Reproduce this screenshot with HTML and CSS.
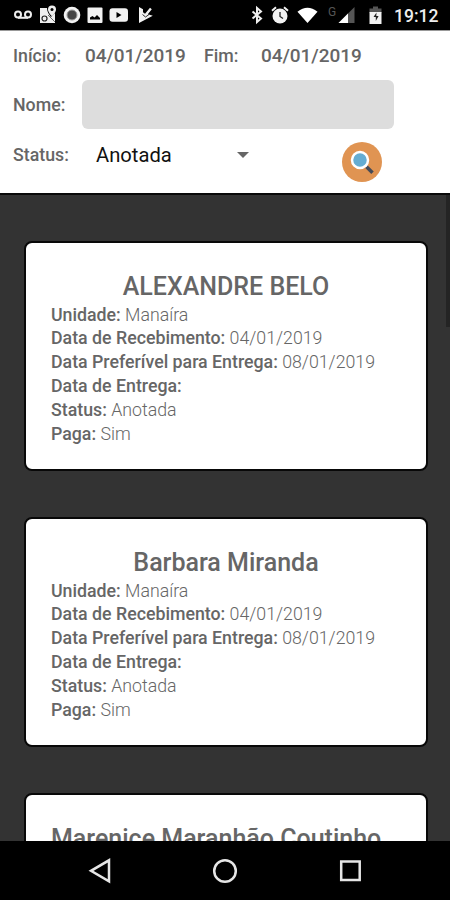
FILE: index.html
```html
<!DOCTYPE html>
<html lang="pt-BR">
<head>
  <meta charset="UTF-8" />
  <meta name="viewport" content="width=device-width, initial-scale=1.0" />
  <title>Encomendas</title>
  <link rel="stylesheet" href="styles.css">
</head>
<body>
  <div class="status-bar">
    <div class="notifications">
      <svg width="20" height="20" viewBox="0 0 20 20" fill="none" stroke="#eee" stroke-width="2"><circle cx="5" cy="9.5" r="3"/><circle cx="15" cy="9.5" r="3"/><path d="M5 12.8h10"/></svg>
      <svg width="18" height="20" viewBox="0 0 18 20"><path fill="#eee" d="M1 3h7c0 4 2 6 4 9l4-4v10H1z"/><path fill="#eee" d="M13 0.5a4 4 0 0 1 4 4c0 3-4 7-4 7s-4-4-4-7a4 4 0 0 1 4-4z"/><circle cx="13" cy="4.5" r="1.5"/><path d="M9 10l7 7" stroke="#444" stroke-width="0.8"/><circle cx="5.5" cy="13.5" r="2.5" fill="none" stroke="#222" stroke-width="1.2"/></svg>
      <svg width="18" height="20" viewBox="0 0 18 20"><circle cx="9" cy="10" r="8.3" fill="#f2f2f2"/><circle cx="9" cy="10" r="5" fill="#444" stroke="#999"/></svg>
      <svg width="16" height="20" viewBox="0 0 16 20"><rect x="0.5" y="2.5" width="15" height="15.5" rx="1" fill="#f2f2f2"/><path d="M3 14.5v-2l2.5-1.5 2 1.5 2.5-2.5 3 3v1.5z"/></svg>
      <svg width="20" height="20" viewBox="0 0 20 20"><rect x="0.5" y="3.2" width="18.5" height="13.5" rx="3" fill="#f2f2f2"/><path d="M7.5 7v6l5-3z"/></svg>
      <svg class="play-check" width="16" height="20" viewBox="0 0 16 20"><path fill="#f2f2f2" d="M1 2l4 2.3v3l2 1.5 5-6 1.8 1.5-4 5 5 1.500L1 18z"/><path d="M4.5 9.5l3 2.5 3.500-2.500" fill="none" stroke="#000" stroke-width="0.8"/></svg>
    </div>
    <div class="system">
      <svg width="12" height="20" viewBox="0 0 12 20" fill="none" stroke="#eee" stroke-width="2"><path d="M1.5 6.5l8.5 7L6 17V3l4 3.5L1.5 13.5"/></svg>
      <svg class="alarm" width="18" height="20" viewBox="0 0 18 20"><circle cx="9" cy="11" r="7.5" fill="#f2f2f2"/><path d="M1 5.7L5 2.3M17 5.7L13 2.3" stroke="#f2f2f2" stroke-width="2"/><path d="M9 7v4.5l3 2" fill="none" stroke="#222" stroke-width="1.3"/></svg>
      <svg class="wifi" width="21" height="20" viewBox="0 0 22 20"><path fill="#fff" d="M0.5 6.5Q11-1.5 21.5 6.5L11 18.5z"/></svg>
      <span class="network">G</span>
      <svg width="17" height="20" viewBox="0 0 17 20"><path fill="#555" d="M16.5 2v16H0.5z"/><path fill="#fff" d="M10 8.5V18H0.5z"/></svg>
      <svg class="battery" width="14" height="20" viewBox="0 0 14 20"><path fill="#555" d="M4 1.5h5v2h3.5V8h-12V3.5H4z"/><path fill="#f2f2f2" d="M0.5 7h12v12h-12z"/><path d="M7.5 7.5L4.5 12h2.3v4l2.8-5H7.3z" fill="#222"/></svg>
      <span class="clock">19:12</span>
    </div>
  </div>

  <form class="filters">
    <div class="row">
      <span class="label">Início:</span>
      <span class="date">04/01/2019</span>
      <span class="label end">Fim:</span>
      <span class="date">04/01/2019</span>
    </div>
    <div class="row name-row">
      <label class="label" for="nome">Nome:</label>
      <input type="text" id="nome">
    </div>
    <div class="row">
      <span class="label status">Status:</span>
      <div class="select">Anotada <span class="arrow"></span></div>
      <button type="button" class="search" aria-label="Buscar">
        <svg width="40" height="40" viewBox="0 0 40 40"><circle cx="20" cy="20" r="20" fill="#e09452"/><path d="M22.5 22.5l3 3" stroke="#eee" stroke-width="2.5"/><path d="M24.5 24.8l6 6" stroke="#444a57" stroke-width="3.6"/><circle cx="18" cy="18" r="8" fill="#65add2" stroke="#fff" stroke-width="2.5"/></svg>
      </button>
    </div>
  </form>

  <main class="orders">
    <div class="card">
      <h2>ALEXANDRE BELO</h2>
      <p><b>Unidade:</b> Manaíra</p>
      <p><b>Data de Recebimento:</b> 04/01/2019</p>
      <p><b>Data Preferível para Entrega:</b> 08/01/2019</p>
      <p><b>Data de Entrega:</b></p>
      <p><b>Status:</b> Anotada</p>
      <p><b>Paga:</b> Sim</p>
    </div>
    <div class="card">
      <h2>Barbara Miranda</h2>
      <p><b>Unidade:</b> Manaíra</p>
      <p><b>Data de Recebimento:</b> 04/01/2019</p>
      <p><b>Data Preferível para Entrega:</b> 08/01/2019</p>
      <p><b>Data de Entrega:</b></p>
      <p><b>Status:</b> Anotada</p>
      <p><b>Paga:</b> Sim</p>
    </div>
    <div class="card">
      <h2 class="long">Marenice Maranhão Coutinho</h2>
    </div>
    <div class="scrollbar"></div>
  </main>

  <nav class="nav-bar">
    <svg width="24" height="26" viewBox="0 0 24 26"><path d="M21 2.3v21L3 12.8z"/></svg>
    <svg width="26" height="26" viewBox="0 0 26 26"><circle cx="13" cy="13" r="10.8"/></svg>
    <svg width="24" height="26" viewBox="0 0 24 26"><rect x="3.2" y="3.5" width="18.5" height="18.5"/></svg>
  </nav>
</body>
</html>
```

FILE: styles.css
```css
* { box-sizing: border-box; }
body {
  margin: 0;
  height: 900px;
  display: flex;
  flex-direction: column;
  overflow: hidden;
  font-family: Roboto, sans-serif;
  font-size: 17.75px;
  color: #666;
  background: #333;
}
.status-bar {
  height: 30px;
  flex: none;
  display: flex;
  justify-content: space-between;
  padding: 5px 12px 0 13px;
  background: #000;
}
.notifications { display: flex; gap: 6px; }
.play-check { margin-left: 3px; }
.system { display: flex; }
.alarm { margin-left: 8px; }
.wifi { margin-left: 8px; }
.network { margin-left: 10px; width: 10px; font-size: 12px; line-height: 15px; color: #555; }
.battery { margin-left: 14px; }
.clock { margin-left: 11px; width: 44px; font-size: 17.5px; font-weight: 500; line-height: 22px; color: #eee; }

.filters {
  height: 165px;
  flex: none;
  border-top: 1px solid #999;
  border-bottom: 2px solid #0a0a0a;
  background: #fff;
}
.row { height: 49px; display: flex; align-items: center; padding-left: 13px; }
.name-row { height: 49px; }
.label { width: 68px; font-weight: 500; line-height: 20px; }
.date { width: 119px; padding-left: 4px; font-size: 19px; font-weight: 500; letter-spacing: -0.05px; }
.label.end { width: 53px; margin-left: 4px; }
.name-row .label { width: 69px; }
input[type="text"] {
  width: 312px;
  height: 49px;
  border: none;
  border-radius: 6px;
  background: #ddd;
}
.row:last-child { height: 51px; }
.select {
  width: 168px;
  display: flex;
  align-items: center;
  justify-content: space-between;
  padding-left: 15px;
  font-size: 20.2px;
  color: #111;
}
.arrow { border: 6px solid transparent; border-top-color: #666; border-bottom: none; }
.search { margin: 14px 0 0 93px; padding: 0; width: 40px; height: 40px; border: none; background: none; }
.search svg { display: block; }

.orders { position: relative; flex: 1; min-height: 0; overflow: hidden; padding: 46px 22px 0 24px; }
.card {
  height: 230px;
  margin-bottom: 46px;
  padding: 28px 25px 0;
  border: 2px solid #080808;
  border-radius: 8px;
  background: #fff;
}
h2 { margin: 0 0 0.6px; font-size: 25px; font-weight: 500; line-height: 32px; text-align: center; white-space: nowrap; }
h2.long { text-align: left; }
p { margin: 0; line-height: 23.8px; font-weight: 300; white-space: nowrap; }
b { font-weight: 500; }
.scrollbar { position: absolute; top: 0; right: 0; width: 4px; height: 132px; background: #242424; }

.nav-bar {
  height: 59px;
  flex: none;
  display: flex;
  justify-content: space-between;
  padding: 17px 88px 0 88px;
  background: #000;
}
.nav-bar svg { fill: none; stroke: #e6e6e6; stroke-width: 2.5; }
```
